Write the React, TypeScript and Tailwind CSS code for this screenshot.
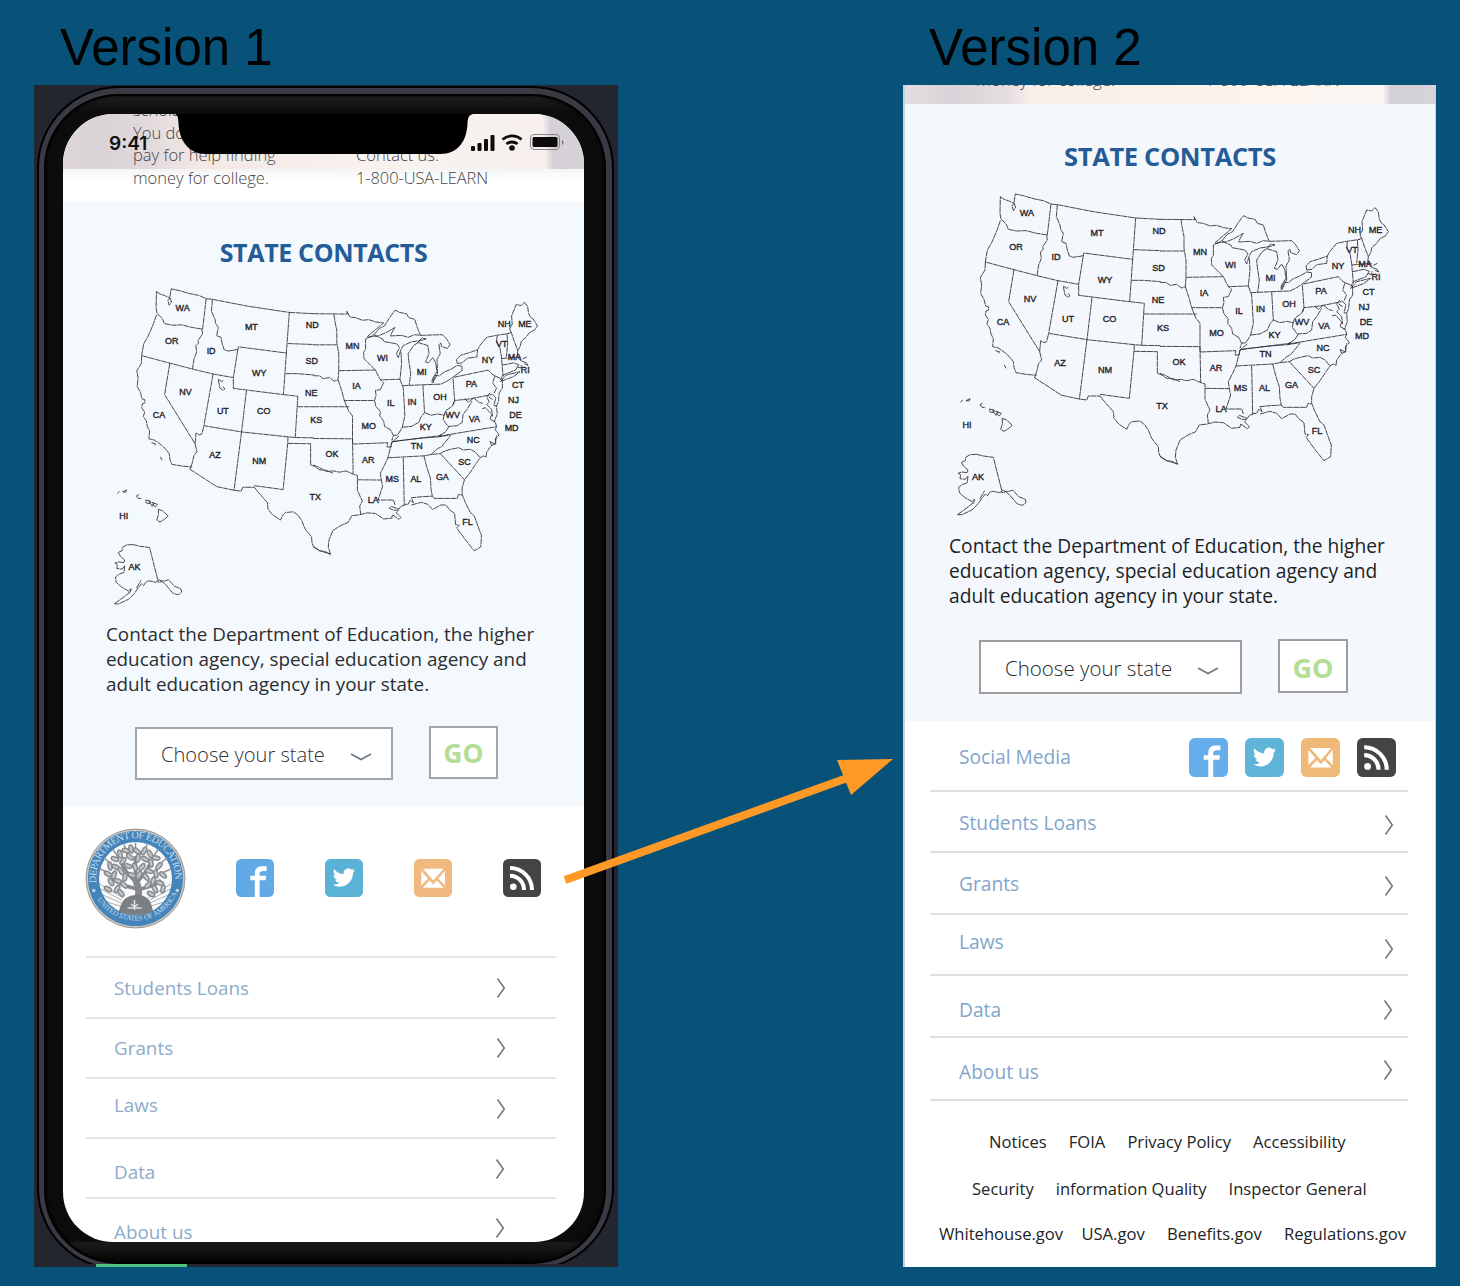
import React from "react";

const WEST = [
  "M181 50L192 58L205 62L222 70L216 78L220 92L227 82L222 68L226 42L250 47L280 56L310 62L333 72L322 165L290 160L258 152L230 153L205 148L200 135L195 128L183 118L180 100Z",
  "M181 122L172 148L165 165L155 188L142 210L136 246L222 269L291 287L296 255L304 235L301 215L310 208L308 200L322 180L320 165",
  "M333 72L352 74L349 110L360 135L362 148L370 160L365 185L378 190L382 210L388 228L400 232L431 227M291 287L354 302L416 313L431 220",
  "M352 74L460 95L587 114L578 238L431 219",
  "M578 238L569 365L416 346L416 313",
  "M587 114L661 118M582 209L661 212M576 301L610 301L662 305",
  "M569 365L613 370L605 496M611 402L661 402M605 496L661 497",
  "M456 353L441 479L583 494L605 496",
  "M136 246L135 270L121 292L125 315L122 340L132 358L137 378L145 380L146 390L138 393L136 405L145 418L141 432L150 445L153 462L160 476L158 500L175 504L195 518L208 530L220 545L222 562L228 578L258 583L290 586",
  "M222 269L206 365L299 515L305 540L296 550L290 575L284 592M299 515L302 482L312 488L320 485L326 460",
  "M354 302L326 460L441 479",
  "M370 318L380 325L386 322M370 320L375 345L384 352L390 348L384 340M166 512L178 515L176 520M193 555L198 565",
];

const SOUTHWEST = [
  "M282 82L365 136L418 147L440 150L445 138L480 138L486 145",
  "M441 -31L418 148",
  "M480 133L568 145L582 4L583 -16",
  "M582 4L652 5L652 70L664 74L680 85L700 86L720 95",
  "M485 145L500 162L520 185L522 205L536 222L560 238L568 222L575 215L600 213L615 225L625 240L635 265L655 290L656 306L660 318L680 332L713 342",
  "M62 157L68 150M78 152L90 146L88 153ZM120 164L126 172L136 172M120 164L128 160M148 177L162 180L160 188L150 186ZM158 182L168 196L174 186ZM172 186L184 190L178 198L170 192Z",
  "M187 205L200 210L217 226L205 236L192 244L182 238L187 222Z",
  "M110 313L90 314L77 322L76 332L64 337L72 350L84 360L82 368L66 366L54 370L62 374L60 386L76 388L84 378L82 398L66 404L56 412L58 428L74 442L84 448L98 456L96 462L72 480L52 494L66 494L96 480L114 462L126 444L136 432L142 438L150 426L160 424L178 428L186 424L160 322L130 318Z",
  "M120 446L134 422M186 420L196 424L194 428L184 427M196 424L206 432L232 462L248 466L258 458L256 448L236 440L218 420L208 424L196 424M98 452L104 448L100 462",
];

const EAST = [
  "M0 118L105 119L102 110L112 128L130 130L150 138L170 136L190 143L215 146L165 188",
  "M63 119L67 145L72 170L72 205L78 240L78 292L190 290M0 213L72 213",
  "M0 307L20 308L30 316L50 313L64 324L76 320L78 292",
  "M76 320L86 350L95 383L187 383L192 368L190 352L205 350L215 328L204 318L190 290",
  "M0 402L110 402M95 383L108 415L120 430L120 515M0 499L120 500M120 516L228 512L225 525",
  "M187 383L192 402L205 416L203 430L215 445L218 462L236 472L245 490L240 505",
  "M190 290L172 272L155 255L154 236L160 226L160 195L185 183L202 163L218 155L232 132L250 107L264 114L285 118L292 130L310 135L318 160L328 185",
  "M165 190L200 185L222 176L250 160L240 176L236 186L270 184L290 190L310 182L328 184L395 182L408 196L418 212L410 224L392 218L390 208L384 212L388 240L378 258L380 300L365 330",
  "M185 183L212 195L216 203L255 210L264 222L254 240L260 252L268 228L275 215L300 204L328 200L345 195L332 192L320 206",
  "M268 235L270 270L265 318L205 320M320 206L306 216L290 240L292 262L298 300L293 337M320 206L350 215L354 240L343 265L352 268L365 252L374 268L378 295L365 315L362 328",
  "M272 338L335 335L390 333L412 322L425 313M265 318L275 345L280 430L272 465L258 488L245 490",
  "M335 335L340 420L330 432L322 450L300 462L272 465M340 420L360 428L380 424L400 428L404 415L425 400L432 383",
  "M427 315L432 383L480 378L545 365M365 328L372 306L385 308L400 296L420 288L440 276L455 278L454 292L425 313",
  "M440 270L438 258L450 245L480 236L502 228L510 214L530 190L560 184L600 178M440 270L456 268L470 254L500 250L502 228",
  "M430 312L535 290L546 302L555 308L548 330L560 345L552 362",
  "M432 383L428 396M400 425L397 442L412 462L440 460L455 450L458 425L470 410L485 385M462 378L475 388L490 375L505 388L518 392",
  "M415 462L405 478L385 492L560 463L556 448L540 440L545 425L526 405L516 408M245 508L390 490",
  "M560 463L556 472L568 488L556 500L558 515L545 520",
  "M555 308L578 318L578 345L568 360L566 385L560 400L562 425L552 450M540 360L530 372L538 388L530 395L545 410L548 432M546 362L558 375L552 398L560 400M536 372L548 380",
  "M562 185L560 205L570 220L575 250L580 310M592 180L594 210L590 250M575 255L635 250M578 275L612 268L628 274L618 290L580 305L572 320",
  "M572 325L590 305L632 295L612 310L580 322Z",
  "M605 175L600 165L608 150L606 125L620 90L635 93L645 83L655 96L658 118L665 130L672 134L685 155L676 168L660 176L650 190L636 202L632 218L625 230L614 202L605 175L596 178",
  "M625 230L623 250L635 262L652 268L656 276L644 270M640 256L652 250M622 280L634 284L636 274",
];

const SOUTHEAST = [
  "M120 20L122 128M0 100L20 108L40 120L62 118L80 122L100 118L122 128L135 132L135 178L150 210L142 225L145 250",
  "M225 45L238 45L240 30L262 12M240 30L228 78L218 100L205 125L208 146L212 165L198 207L245 207L250 222",
  "M135 145L208 146M0 350L20 362L36 364L53 373L46 352L48 330L60 300L76 290L90 282L106 276L118 255L142 252L165 246L190 248L215 265L240 262L242 252L262 266L268 260L254 246L260 238L246 238L232 232L238 226L262 235L268 226L280 222",
  "M228 78L338 72L360 68L388 65M275 78L278 222M338 72L348 110L358 140L360 175L364 195L330 197L300 200L306 215L296 208L290 220L278 220",
  "M364 195L370 202L440 202L444 190L455 192",
  "M300 222L330 214L350 220L365 236L390 222L405 222L418 238L432 248L435 282L446 284L438 292L455 315L470 335L492 362L512 350L514 315L508 300L492 255L480 245L465 215L455 190L455 170L462 145L480 122L500 92L510 78",
  "M388 65L462 145M388 65L400 58L420 52L445 47L458 54L480 52L495 60L510 78L520 72L528 76L530 60L545 40L540 28L556 36L560 10",
  "M240 30L262 26L330 18L383 14L420 8M383 14L390 6M360 68L380 50L392 44L420 10",
];

const LABELS: [string, number, number][] = [
  ["WA", 1027, 213], ["OR", 1016, 247], ["ID", 1056, 257], ["MT", 1097, 233], ["ND", 1159, 231],
  ["SD", 1158.5, 267.5], ["WY", 1105, 280], ["NE", 1158, 300], ["NV", 1030, 299], ["UT", 1068, 318.5],
  ["CO", 1109.5, 318.5], ["KS", 1163, 327.5], ["CA", 1003, 322], ["AZ", 1060, 363], ["NM", 1105, 369.5],
  ["OK", 1179, 362], ["TX", 1162, 406], ["MN", 1200, 252], ["IA", 1204, 293], ["MO", 1216.5, 333],
  ["AR", 1216, 368], ["LA", 1221, 408.5], ["WI", 1230.5, 264.5], ["MI", 1270.5, 278], ["IL", 1239, 310.5],
  ["IN", 1260.5, 309], ["OH", 1289, 304], ["KY", 1274.5, 335], ["TN", 1265.5, 354], ["MS", 1240.5, 387.5],
  ["AL", 1264.5, 387.5], ["GA", 1291.5, 385], ["FL", 1317, 431], ["SC", 1314, 370], ["NC", 1323, 348],
  ["VA", 1324, 326], ["WV", 1302, 322], ["PA", 1321, 291], ["NY", 1338, 266], ["VT", 1352, 250],
  ["NH", 1354.5, 229.5], ["ME", 1375.5, 229.5], ["MA", 1365, 263.5], ["RI", 1376, 276.5], ["CT", 1368.5, 291.5],
  ["NJ", 1364, 307], ["DE", 1366, 322], ["MD", 1362, 335.5], ["HI", 967, 425], ["AK", 978, 477],
];

function UsMap({ className }: { className: string }) {
  const regions: [string, string[]][] = [
    ["translate(940 180) scale(.33333)", WEST],
    ["translate(940 350) scale(.33333)", SOUTHWEST],
    ["translate(1160 180) scale(.33333)", EAST],
    ["translate(1160 340) scale(.33333)", SOUTHEAST],
  ];
  return (
    <svg viewBox="950 185 445 340" className={className} preserveAspectRatio="none">
      {regions.map(([transform, paths]) => (
        <g key={transform} transform={transform} fill="none" stroke="#2f2c33" strokeWidth="2.6" strokeDasharray="18 1.5">
          {paths.map((d) => (
            <path key={d} d={d} />
          ))}
        </g>
      ))}
      <g fontFamily="Liberation Sans, sans-serif" fontSize="9.8" fill="#27242b" stroke="#27242b" strokeWidth=".4" textAnchor="middle">
        {LABELS.map(([name, x, y]) => (
          <text key={name} transform={`translate(${x} ${y + 3.2}) scale(.93 1)`}>{name}</text>
        ))}
      </g>
    </svg>
  );
}

function Chevron({ className }: { className: string }) {
  return (
    <svg viewBox="0 0 10 22" className={className} fill="none" stroke="#6f7a80" strokeWidth="1.6">
      <path d="M1.500 1.500L8.300 11L1.500 20.500" />
    </svg>
  );
}

function SocialIcons({ className, size, palette }: { className: string; size: string; palette: string[] }) {
  return (
    <div className={className}>
      <svg viewBox="0 0 38 38" className={size}>
        <rect width="38" height="38" rx="5.500" fill={palette[0]} />
        <path fill="#fff" d="M18.800 38V21.200H14.300V16.700H18.800V14.500C18.800 9.800 21.500 7.200 26 7.200H30.600V12H27C24.700 12 23.600 12.800 23.600 14.900V16.700H30.200L29.600 21.200H23.600V38Z" />
      </svg>
      <svg viewBox="0 0 38 38" className={size}>
        <rect width="38" height="38" rx="5.500" fill={palette[1]} />
        <path fill="#fff" transform="translate(7.700 7.300) scale(.94)" d="M23.950 4.570a10 10 0 01-2.820.77 4.960 4.960 0 002.160-2.720c-.95.55-2 .95-3.130 1.180a4.920 4.920 0 00-8.380 4.480C7.690 8.090 4.070 6.130 1.640 3.160a4.820 4.820 0 00-.67 2.480c0 1.710.87 3.210 2.190 4.100a4.900 4.900 0 01-2.230-.62v.06a4.920 4.920 0 003.950 4.830 5 5 0 01-2.210.08 4.940 4.940 0 004.600 3.420A9.870 9.870 0 010 19.540a13.990 13.990 0 007.550 2.210c9.050 0 14-7.500 14-13.980 0-.21 0-.42-.02-.63.96-.69 1.800-1.560 2.460-2.550z" />
      </svg>
      <svg viewBox="0 0 38 38" className={size}>
        <rect width="38" height="38" rx="5.500" fill={palette[2]} />
        <path fill="#fff" d="M9 9.800H29.600L19.300 21.400ZM7.200 11.800L14 19.500L7.200 26.400ZM31 11.800L24.300 19.500L31 26.400ZM15.600 21.600L19.300 25.600L22.900 21.600L29.600 28.700H8.800Z" />
      </svg>
      <svg viewBox="0 0 38 38" className={size}>
        <rect width="38" height="38" rx="5.500" fill="#444444" />
        <circle cx="10.300" cy="27.700" r="3.300" fill="#fff" />
        <path fill="none" stroke="#fff" strokeWidth="4" d="M7 16.700A14 14 0 0121 31M7 9A22 22 0 0129 31" />
      </svg>
    </div>
  );
}

const LEAVES = [
  [60, 62, 20], [70, 52, 70], [82, 45, 10], [92, 42, 80], [104, 46, 40], [118, 46, 120], [130, 52, 60], [142, 60, 10],
  [50, 76, 80], [62, 78, 30], [76, 66, 130], [90, 58, 40], [106, 60, 100], [120, 62, 30], [132, 70, 80], [148, 76, 130],
  [46, 92, 30], [58, 94, 110], [72, 86, 60], [86, 76, 20], [100, 78, 70], [114, 78, 130], [128, 86, 20], [142, 92, 80],
  [156, 94, 40], [52, 108, 60], [66, 106, 20], [80, 98, 100], [122, 98, 50], [136, 106, 110], [150, 110, 20],
  [64, 122, 120], [78, 114, 40], [126, 114, 130], [140, 122, 60], [156, 122, 100], [46, 122, 30], [94, 94, 20], [108, 94, 120],
  [72, 130, 50], [132, 132, 30],
];

function Seal() {
  return (
    <svg viewBox="0 0 202 202" className="h-[101px] w-[101px]">
      <defs>
        <path id="seal-top" d="M23 112A79 79 0 1 1 179 112" />
        <path id="seal-bottom" d="M13 114A90 90 0 0 0 189 114" />
      </defs>
      <circle cx="101" cy="101" r="99" fill="#c9c5c2" stroke="#9b9998" strokeWidth="2" />
      <circle cx="101" cy="101" r="95" fill="#4384ba" />
      <circle cx="101" cy="101" r="73" fill="#fbfbfb" />
      <g stroke="#8f9499" strokeWidth="3">
        <path d="M101 29V50M78 33L84 52M56 43L67 60M38 60L54 73M124 33L118 52M146 43L135 60M164 60L148 73M30 82L48 90M172 82L154 90" />
        <path strokeWidth="1.500" d="M30 112L76 140M32 122L74 145M36 134L72 150M44 148L70 156M172 112L126 140M170 122L128 145M166 134L130 150M158 148L132 156" />
      </g>
      <g fill="none" stroke="#85898e" strokeWidth="7">
        <path strokeWidth="14" d="M105 148C109 126 108 124 101 102" />
        <path d="M107 124C125 116 140 118 152 104M105 122C86 118 66 112 54 100M102 108C84 92 76 80 72 66M104 108C122 92 128 76 134 64M101 102L101 56" />
      </g>
      {LEAVES.map(([x, y, a], i) => (
        <ellipse key={i} cx={x} cy={y} rx="8" ry="4" fill="#c3c6c9" stroke="#878b90" strokeWidth="3" transform={`rotate(${a} ${x} ${y})`} />
      ))}
      <path d="M68 167C72 142 86 134 104 134S132 142 136 167C116 177 88 177 68 167Z" fill="#7a7f84" />
      <path d="M99 144V164M85 160H113M92 152L99 158L106 152" stroke="#dfe2e4" strokeWidth="3" fill="none" />
      <circle cx="17.500" cy="125" r="3.500" fill="#b9d3e8" />
      <circle cx="184.500" cy="125" r="3.500" fill="#b9d3e8" />
      <g fill="#c9ddec" fontFamily="Liberation Serif, serif" fontWeight="400">
        <text fontSize="20.500" textLength="262"><textPath href="#seal-top" startOffset="2">DEPARTMENT OF EDUCATION</textPath></text>
        <text fontSize="14.500" textLength="196"><textPath href="#seal-bottom" startOffset="31">UNITED STATES OF AMERICA</textPath></text>
      </g>
    </svg>
  );
}

type Row = { label: string; box: string; text: string; chevron: string };

const PHONE_ROWS: Row[] = [
  { label: "Students Loans", box: "h-[61px]", text: "pt-[1px]", chevron: "mt-[0px]" },
  { label: "Grants", box: "h-[60px]", text: "pb-[1px]", chevron: "mt-[0px]" },
  { label: "Laws", box: "h-[60px]", text: "pb-[7px]", chevron: "mt-[2px]" },
  { label: "Data", box: "h-[60px]", text: "pt-[7px]", chevron: "mt-[1px] mr-[1px]" },
  { label: "About us", box: "h-[61px]", text: "pt-[7px]", chevron: "mt-[-2px] mr-[1px]" },
];

const CARD_ROWS: Row[] = [
  { label: "Students Loans", box: "h-[61px]", text: "pt-[3px]", chevron: "mt-[6px]" },
  { label: "Grants", box: "h-[62px]", text: "pt-[1px]", chevron: "mt-[6px]" },
  { label: "Laws", box: "h-[61px]", text: "pb-[6px]", chevron: "mt-[8px]" },
  { label: "Data", box: "h-[62px]", text: "pt-[8px]", chevron: "mt-[7px] mr-[1px]" },
  { label: "About us", box: "h-[63px]", text: "pt-[6px]", chevron: "mt-[2px] mr-[1px]" },
];

const FOOTER = [
  { box: "mt-[29px] ml-[84px] gap-[22px]", links: ["Notices", "FOIA", "Privacy Policy", "Accessibility"] },
  { box: "mt-[23px] ml-[67px] gap-[22px]", links: ["Security", "information Quality", "Inspector General"] },
  { box: "mt-[21px] ml-[34px] w-[467px] justify-between [&>a:first-child]:-mr-1", links: ["Whitehouse.gov", "USA.gov", "Benefits.gov", "Regulations.gov"] },
];

function PhoneScreen() {
  return (
    <div className="relative h-[1128px] w-[521px] overflow-hidden rounded-[50px] bg-white">
      <div className="h-[88px] bg-[linear-gradient(180deg,transparent_55px,#f4f4f4_55px,#ffffff_66px),linear-gradient(86deg,#ddd5d9_0px,#d9d2d7_45px,#e0d8dc_85px,#f3e8e4_140px,#f9f3ef_330px,#f6efed_484px,#d4d0d7_492px,#d6d2d8_521px)]">
        <div className="flex text-[16.500px] leading-[22.500px] font-light text-[#454545]">
          <div className="ml-[70px] mt-[-15px] w-[223px]">
            <p>scholarships.</p>
            <p>You do not</p>
            <p>pay for help finding</p>
            <p>money for college.</p>
          </div>
          <div className="mt-[30px]">
            <p>Contact us:</p>
            <p className="tracking-[-0.100px]">1-800-USA-LEARN</p>
          </div>
        </div>
      </div>
      <section className="flex h-[604px] flex-col bg-[#f4f9fd]">
        <h2 className="mt-[34px] text-center text-[25px] leading-[32px] font-bold tracking-[-0.350px] text-[#245c98]">STATE CONTACTS</h2>
        <UsMap className="ml-[44px] mt-[12px] h-[334px] w-[437px] shrink-0" />
        <p className="ml-[43px] mt-[8px] text-[18.850px] leading-[25.200px] whitespace-nowrap text-[#2b2d2f]">
          Contact the Department of Education, the higher<br />education agency, special education agency and<br />adult education agency in your state.
        </p>
        <div className="mt-[29px] ml-[72px] flex gap-[36px]">
          <div className="flex h-[53px] w-[258px] items-center border-2 border-[#a3a5a7] bg-white pt-[4px] pl-[24px] text-[20.100px] font-light text-[#2f3134]">
            Choose your state
            <svg viewBox="0 0 22 10" className="mt-1 ml-[25px] h-[10px] w-[22px]" fill="none" stroke="#6f7a80" strokeWidth="1.700"><path d="M1 2L11 7.500L21 2" /></svg>
          </div>
          <div className="-mt-px flex h-[53px] w-[69px] items-center justify-center border-2 border-[#a3a5a7] bg-white pt-[4px] text-[26.500px] font-bold text-[#b4dd96]">GO</div>
        </div>
      </section>
      <div className="flex h-[150px] items-center pb-[6px] pl-[22px]">
        <Seal />
        <SocialIcons className="ml-[50px] flex gap-[51px]" size="h-[38px] w-[38px]" palette={["#61aae6", "#5ab2d7", "#f1b97f"]} />
      </div>
      <nav className="ml-[23px] w-[470px]">
        {PHONE_ROWS.map((row) => (
          <div key={row.label} className={`flex items-center justify-between border-t-2 border-[#e4e5e5] pr-[50px] pl-[28px] ${row.box}`}>
            <span className={`text-[18.850px] leading-[26px] text-[#8dabca] ${row.text}`}>{row.label}</span>
            <Chevron className={`h-[22px] w-[10px] ${row.chevron}`} />
          </div>
        ))}
      </nav>
      <div className="absolute inset-x-0 top-0 h-[56px]">
        <svg viewBox="0 0 521 56" className="h-[56px] w-[521px]">
          <path d="M112 0C115 1 115 4 115.500 9C116 27 126 40 143 40H377C395 40 404 27 404.500 9C405 3 406 1 410 0Z" fill="#000" />
          <g fill="#0c0c0d">
            <rect x="408" y="32" width="4" height="5" rx="1" />
            <rect x="414.500" y="29" width="4" height="8" rx="1" />
            <rect x="421" y="25" width="4" height="12" rx="1" />
            <rect x="427.500" y="21" width="4" height="16" rx="1" />
            <rect x="469.500" y="23" width="25" height="10" rx="1.500" />
            <path d="M499 26C501 27 501 30 499 31Z" opacity=".5" />
            <circle cx="449" cy="34" r="2.800" />
          </g>
          <rect x="467.500" y="20.500" width="29" height="15" rx="3.500" fill="none" stroke="#8b878c" />
          <path d="M439.500 25.500A14.500 14.500 0 01458.500 25.500M443.500 30A8.500 8.500 0 01454.500 30" fill="none" stroke="#0c0c0d" strokeWidth="2.800" />
        </svg>
        <span className="absolute top-[18px] left-[46px] font-[Inter,sans-serif] text-[19px] leading-[24px] font-semibold text-[#111]">9:41</span>
      </div>
    </div>
  );
}

function Phone() {
  return (
    <div className="relative h-[1182px] w-[584px] overflow-hidden bg-[#23252f]">
      <div className="h-[1179px] overflow-hidden pt-px pl-[3px]">
        <div className="h-[1184px] w-[577px] rounded-[82px] bg-black p-[2px]">
          <div className="h-[1180px] rounded-[80px] bg-[#393a44] pt-[6px] pr-[6px] pl-[5px]">
            <div className="h-[1170px] rounded-[74px] bg-black p-[2px]">
              <div className="h-[1166px] rounded-[72px] bg-[linear-gradient(180deg,#1e1e1e_0px,#0c0c0c_16px,#0b0b0b_1145px,#1b1b1b_1147px,#080808_1163px)] pt-[18px] pl-[17px] shadow-[inset_0_0_3px_#000]">
                <PhoneScreen />
              </div>
            </div>
          </div>
        </div>
      </div>
      <div className="ml-[62px] h-[3px] w-[91px] bg-[#4fc07b]" />
    </div>
  );
}

function Card() {
  return (
    <div className="h-[1182px] w-[533px] overflow-hidden border-r border-l-2 border-[#c5d3df] bg-white">
      <div className="h-[19px] overflow-hidden bg-[linear-gradient(90deg,#e4dce0_0px,#d8d3d8_50px,#e6dfe2_105px,#f9efe9_125px,#fcf5f0_400px,#f9f6f3_478px,#d3d0d8_486px,#d6d3da_531px)]">
        <div className="mt-[-17px] flex text-[16.900px] leading-[24px] font-light text-[#45403f]">
          <span className="ml-[71px] w-[229px]">money for college.</span>
          <span className="tracking-[-0.150px]">1-800-USA-LEARN</span>
        </div>
      </div>
      <section className="flex h-[617px] flex-col bg-[#f4f8fd]">
        <h2 className="mt-[36px] text-center text-[25.500px] leading-[32px] font-bold tracking-[-0.350px] text-[#245c98]">STATE CONTACTS</h2>
        <UsMap className="mt-[13px] ml-[45px] h-[340px] w-[445px] shrink-0" />
        <p className="mt-[8px] ml-[44px] text-[19.200px] leading-[25.200px] whitespace-nowrap text-[#202224]">
          Contact the Department of Education, the higher<br />education agency, special education agency and<br />adult education agency in your state.
        </p>
        <div className="mt-[31px] ml-[74px] flex gap-[36px]">
          <div className="flex h-[54px] w-[263px] items-center border-2 border-[#9c9e9f] bg-white pt-[4px] pl-[24px] text-[20.500px] font-light text-[#25272a]">
            Choose your state
            <svg viewBox="0 0 22 10" className="mt-1 ml-[25px] h-[10px] w-[22px]" fill="none" stroke="#6f7a80" strokeWidth="1.700"><path d="M1 2L11 7.500L21 2" /></svg>
          </div>
          <div className="-mt-px flex h-[54px] w-[70px] items-center justify-center border-2 border-[#9c9e9f] bg-white pt-[5px] text-[27px] font-bold text-[#b4dd96]">GO</div>
        </div>
      </section>
      <nav className="ml-[25px] w-[478px]">
        <div className="flex h-[71px] items-center justify-between border-b-2 border-[#dedfe1] pr-[12px] pl-[29px]">
          <span className="pt-[2px] text-[19.200px] leading-[26px] text-[#82a5cd]">Social Media</span>
          <SocialIcons className="mt-[3px] flex gap-[17px]" size="h-[39px] w-[39px]" palette={["#66adeb", "#60b4da", "#efba77"]} />
        </div>
        {CARD_ROWS.map((row) => (
          <div key={row.label} className={`flex items-center justify-between border-b-2 border-[#dedfe1] pr-[14px] pl-[29px] ${row.box}`}>
            <span className={`text-[19.200px] leading-[26px] text-[#82a5cd] ${row.text}`}>{row.label}</span>
            <Chevron className={`h-[22px] w-[10px] ${row.chevron}`} />
          </div>
        ))}
      </nav>
      {FOOTER.map((row) => (
        <div key={row.links[0]} className={`flex text-[16.600px] leading-[24px] whitespace-nowrap text-[#222426] ${row.box}`}>
          {row.links.map((link) => (
            <a key={link}>{link}</a>
          ))}
        </div>
      ))}
    </div>
  );
}

export default function App() {
  return (
    <main className="relative h-[1286px] w-[1460px] overflow-hidden bg-[#08527a] font-['Open_Sans',sans-serif]">
      <div className="flex pl-[34px]">
        <div className="w-[869px]">
          <h1 className="h-[85px] pt-[17px] pl-[26px] font-['Liberation_Sans',sans-serif] text-[51px] leading-[62px] text-black">Version 1</h1>
          <Phone />
        </div>
        <div>
          <h1 className="h-[85px] pt-[17px] pl-[26px] font-['Liberation_Sans',sans-serif] text-[51px] leading-[62px] text-black">Version 2</h1>
          <Card />
        </div>
      </div>
      <svg viewBox="0 0 340 140" className="absolute top-[750px] left-[560px] h-[140px] w-[340px]">
        <path d="M5 130L290 27" stroke="#ff9926" strokeWidth="8" />
        <path d="M333 9L277 10L291 45Z" fill="#ff9926" />
      </svg>
    </main>
  );
}
